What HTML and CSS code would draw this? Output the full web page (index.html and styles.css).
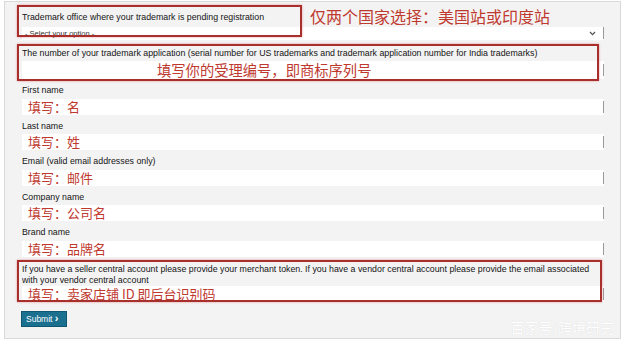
FILE: index.html
```html
<!DOCTYPE html>
<html lang="zh-CN">
<head>
    <meta charset="UTF-8">
    <meta name="viewport" content="width=device-width, initial-scale=1.0">
    <title>Trademark form</title>
    <link rel="stylesheet" href="styles.css">
</head>
<body>
    <div class="panel">
        <!-- Офис регистрации -->
        <div class="field field-office">
            <label class="label">Trademark office where your trademark is pending registration</label>
            <div class="select">
                <span class="select-text">- Select your option -</span>
                <svg class="chevron" width="7" height="5" viewBox="0 0 7 5"><path d="M1 1 L3.5 3.6 L6 1" fill="none" stroke="#555" stroke-width="1.3"/></svg>
            </div>
            <div class="mark mark-office"></div>
            <div class="note note-office">仅两个国家选择：美国站或印度站</div>
        </div>

        <div class="field field-number">
            <label class="label">The number of your trademark application (serial number for US trademarks and trademark application number for India trademarks)</label>
            <div class="input input-tall"><span class="hint hint-number">填写你的受理编号，即商标序列号</span></div>
            <div class="mark mark-number"></div>
        </div>

        <div class="field">
            <label class="label">First name</label>
            <div class="input"><span class="hint">填写：名</span></div>
        </div>

        <div class="field">
            <label class="label">Last name</label>
            <div class="input"><span class="hint">填写：姓</span></div>
        </div>

        <div class="field">
            <label class="label">Email (valid email addresses only)</label>
            <div class="input"><span class="hint">填写：邮件</span></div>
        </div>

        <div class="field">
            <label class="label">Company name</label>
            <div class="input"><span class="hint">填写：公司名</span></div>
        </div>

        <div class="field">
            <label class="label">Brand name</label>
            <div class="input"><span class="hint">填写：品牌名</span></div>
        </div>

        <div class="field field-token">
            <label class="label label-wrap">If you have a seller central account please provide your merchant token. If you have a vendor central account please provide the email associated with your vendor central account</label>
            <div class="input"><span class="hint">填写：卖家店铺 ID 即后台识别码</span></div>
            <div class="mark mark-token"></div>
        </div>

        <div class="actions">
            <button class="submit">Submit <span class="arrow">&#8250;</span></button>
        </div>
        <span class="watermark">百家号/跨境研究</span>
    </div>
</body>
</html>
```

FILE: styles.css
```css
/* Общие стили */
body {
    margin: 0;
    background: #fff;
    font-family: "Liberation Sans", Arial, "Noto Sans CJK SC", sans-serif;
    color: #141414;
}

.panel {
    position: relative;
    width: 582px;
    margin: 1px 0 0 4px;
    padding: 10px 16px 11px 17px;
    background: #f3f3f3;
    border: 1px solid #d9d9d9;
}

.field {
    position: relative;
    margin-bottom: 6px;
}

.label {
    display: block;
    font-size: 8.8px;
    line-height: 11.5px;
    margin-bottom: 2px;
    white-space: nowrap;
    overflow: hidden;
}

.label-wrap {
    white-space: normal;
    line-height: 11px;
    margin-bottom: 0;
    margin-right: -2px;
}

/* Поля ввода */
.input,
.select {
    height: 16px;
    display: flex;
    align-items: center;
    background: #fff linear-gradient(#9a9a9a, #9a9a9a) right center / 1px 12px no-repeat;
}

.input-tall {
    height: 18px;
}

.select {
    height: 13px;
    margin-top: 3px;
}

.field-office {
    margin-bottom: 8px;
}

.field-number {
    margin-bottom: 6px;
}

.field-token {
    margin-top: 7px;
    margin-bottom: 9px;
}

.select-text {
    font-size: 7.5px;
    color: #333;
    padding-left: 3px;
    flex: 1;
}

.chevron {
    margin-right: 8px;
}

.hint {
    font-family: "Noto Sans CJK SC", sans-serif;
    font-size: 13px;
    color: #c0392f;
    padding-left: 6px;
    line-height: 16px;
}

.hint-number {
    font-size: 14.3px;
    padding-left: 135px;
}

/* Красные рамки-пометки */
.mark {
    position: absolute;
    border: 2px solid #a8302c;
    box-shadow: 0 0 2px rgba(230, 110, 110, 0.7);
    pointer-events: none;
}

.mark-office {
    left: -5px;
    top: -7px;
    width: 281px;
    height: 28px;
}

.mark-number {
    left: -5px;
    top: -4px;
    width: 578px;
    height: 33px;
}

.mark-token {
    left: -5px;
    top: -4px;
    width: 581px;
    height: 38px;
}

.note {
    position: absolute;
    left: 288px;
    top: -7px;
    font-family: "Noto Sans CJK SC", sans-serif;
    font-size: 16px;
    line-height: 22px;
    color: #c0392f;
    white-space: nowrap;
}

/* Кнопка */
.actions {
    display: flex;
    align-items: center;
    height: 16px;
}

.submit {
    height: 16px;
    width: 46px;
    margin-left: -1px;
    padding: 0 0 0 4px;
    border: 1px solid #0f5670;
    background: #1b7090;
    color: #fff;
    font-family: "Liberation Sans", Arial, sans-serif;
    font-size: 8.5px;
    text-align: left;
    white-space: nowrap;
}

.arrow {
    font-weight: 700;
    font-size: 11px;
    line-height: 8px;
}

.watermark {
    position: absolute;
    right: 6px;
    bottom: 3px;
    font-family: "Noto Sans CJK SC", sans-serif;
    font-size: 14px;
    line-height: 16px;
    color: #fff;
    text-shadow: 0 0 1px rgba(0, 0, 0, 0.14);
}
```
